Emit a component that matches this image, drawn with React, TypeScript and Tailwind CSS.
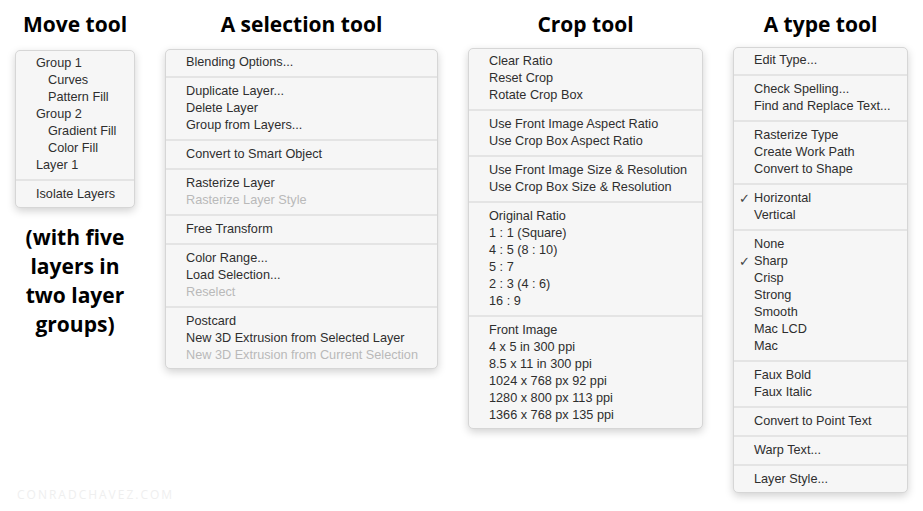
type Item = { label: string; indent?: boolean; disabled?: boolean; checked?: boolean };

const moveMenu: Item[][] = [
  [
    { label: 'Group 1' },
    { label: 'Curves', indent: true },
    { label: 'Pattern Fill', indent: true },
    { label: 'Group 2' },
    { label: 'Gradient Fill', indent: true },
    { label: 'Color Fill', indent: true },
    { label: 'Layer 1' },
  ],
  [{ label: 'Isolate Layers' }],
];

const selectionMenu: Item[][] = [
  [{ label: 'Blending Options...' }],
  [{ label: 'Duplicate Layer...' }, { label: 'Delete Layer' }, { label: 'Group from Layers...' }],
  [{ label: 'Convert to Smart Object' }],
  [{ label: 'Rasterize Layer' }, { label: 'Rasterize Layer Style', disabled: true }],
  [{ label: 'Free Transform' }],
  [{ label: 'Color Range...' }, { label: 'Load Selection...' }, { label: 'Reselect', disabled: true }],
  [
    { label: 'Postcard' },
    { label: 'New 3D Extrusion from Selected Layer' },
    { label: 'New 3D Extrusion from Current Selection', disabled: true },
  ],
];

const cropMenu: Item[][] = [
  [{ label: 'Clear Ratio' }, { label: 'Reset Crop' }, { label: 'Rotate Crop Box' }],
  [{ label: 'Use Front Image Aspect Ratio' }, { label: 'Use Crop Box Aspect Ratio' }],
  [{ label: 'Use Front Image Size & Resolution' }, { label: 'Use Crop Box Size & Resolution' }],
  [
    { label: 'Original Ratio' },
    { label: '1 : 1 (Square)' },
    { label: '4 : 5 (8 : 10)' },
    { label: '5 : 7' },
    { label: '2 : 3 (4 : 6)' },
    { label: '16 : 9' },
  ],
  [
    { label: 'Front Image' },
    { label: '4 x 5 in 300 ppi' },
    { label: '8.5 x 11 in 300 ppi' },
    { label: '1024 x 768 px 92 ppi' },
    { label: '1280 x 800 px 113 ppi' },
    { label: '1366 x 768 px 135 ppi' },
  ],
];

const typeMenu: Item[][] = [
  [{ label: 'Edit Type...' }],
  [{ label: 'Check Spelling...' }, { label: 'Find and Replace Text...' }],
  [{ label: 'Rasterize Type' }, { label: 'Create Work Path' }, { label: 'Convert to Shape' }],
  [{ label: 'Horizontal', checked: true }, { label: 'Vertical' }],
  [
    { label: 'None' },
    { label: 'Sharp', checked: true },
    { label: 'Crisp' },
    { label: 'Strong' },
    { label: 'Smooth' },
    { label: 'Mac LCD' },
    { label: 'Mac' },
  ],
  [{ label: 'Faux Bold' }, { label: 'Faux Italic' }],
  [{ label: 'Convert to Point Text' }],
  [{ label: 'Warp Text...' }],
  [{ label: 'Layer Style...' }],
];

function Menu({ sections, width }: { sections: Item[][]; width: string }) {
  return (
    <div
      className={`${width} bg-[#f6f6f6] border border-[#d6d6d6] rounded-[5px] shadow-[0_3px_8px_rgba(0,0,0,0.18)] py-[4px]`}
    >
      {sections.map((section, si) => (
        <div key={si}>
          {si > 0 && <div className="my-[5px] h-[2px] bg-[#e4e4e4]" />}
          {section.map((item) => (
            <div
              key={item.label}
              className={`relative h-[17px] leading-[17px] whitespace-nowrap text-[12.7px] ${
                item.indent ? 'pl-[32px]' : 'pl-[20px]'
              } ${item.disabled ? 'text-[#b9b9b9]' : 'text-[#2e2e2e]'}`}
            >
              {item.checked && (
                <span className="absolute left-[5px] top-0 text-[13px] text-[#444] font-['DejaVu_Sans',sans-serif]">✓</span>
              )}
              {item.label}
            </div>
          ))}
        </div>
      ))}
    </div>
  );
}

function Title({ children }: { children: React.ReactNode }) {
  return (
    <h2 className="text-center text-[21px] font-bold leading-[26px] text-black whitespace-nowrap font-['Open_Sans',sans-serif] mb-[11px]">
      {children}
    </h2>
  );
}

export default function App() {
  return (
    <div className="relative w-[923px] h-[511px] bg-white overflow-hidden font-['Liberation_Sans',Arial,sans-serif]">
      <div className="flex items-start gap-[30px] px-[15px] pt-[11px]">
        <div className="flex flex-col items-center w-[120px]">
          <Title>Move tool</Title>
          <div className="mt-[2px]">
            <Menu sections={moveMenu} width="w-[120px]" />
          </div>
          <p className="mt-[15px] text-center text-[21px] font-bold leading-[29px] text-black font-['Open_Sans',sans-serif]">
            (with five
            <br />
            layers in
            <br />
            two layer
            <br />
            groups)
          </p>
        </div>
        <div className="flex flex-col items-center w-[273px]">
          <Title>A selection tool</Title>
          <div className="mt-[1px]">
            <Menu sections={selectionMenu} width="w-[273px]" />
          </div>
        </div>
        <div className="flex flex-col items-center w-[235px]">
          <Title>Crop tool</Title>
          <Menu sections={cropMenu} width="w-[235px]" />
        </div>
        <div className="flex flex-col items-center w-[175px]">
          <Title>A type tool</Title>
          <div className="-mt-[1px]">
            <Menu sections={typeMenu} width="w-[175px]" />
          </div>
        </div>
      </div>
      <div className="absolute left-[17px] top-[486px] text-[12px] tracking-[2px] text-[#efefef] font-['Open_Sans',sans-serif]">
        CONRADCHAVEZ.COM
      </div>
    </div>
  );
}
